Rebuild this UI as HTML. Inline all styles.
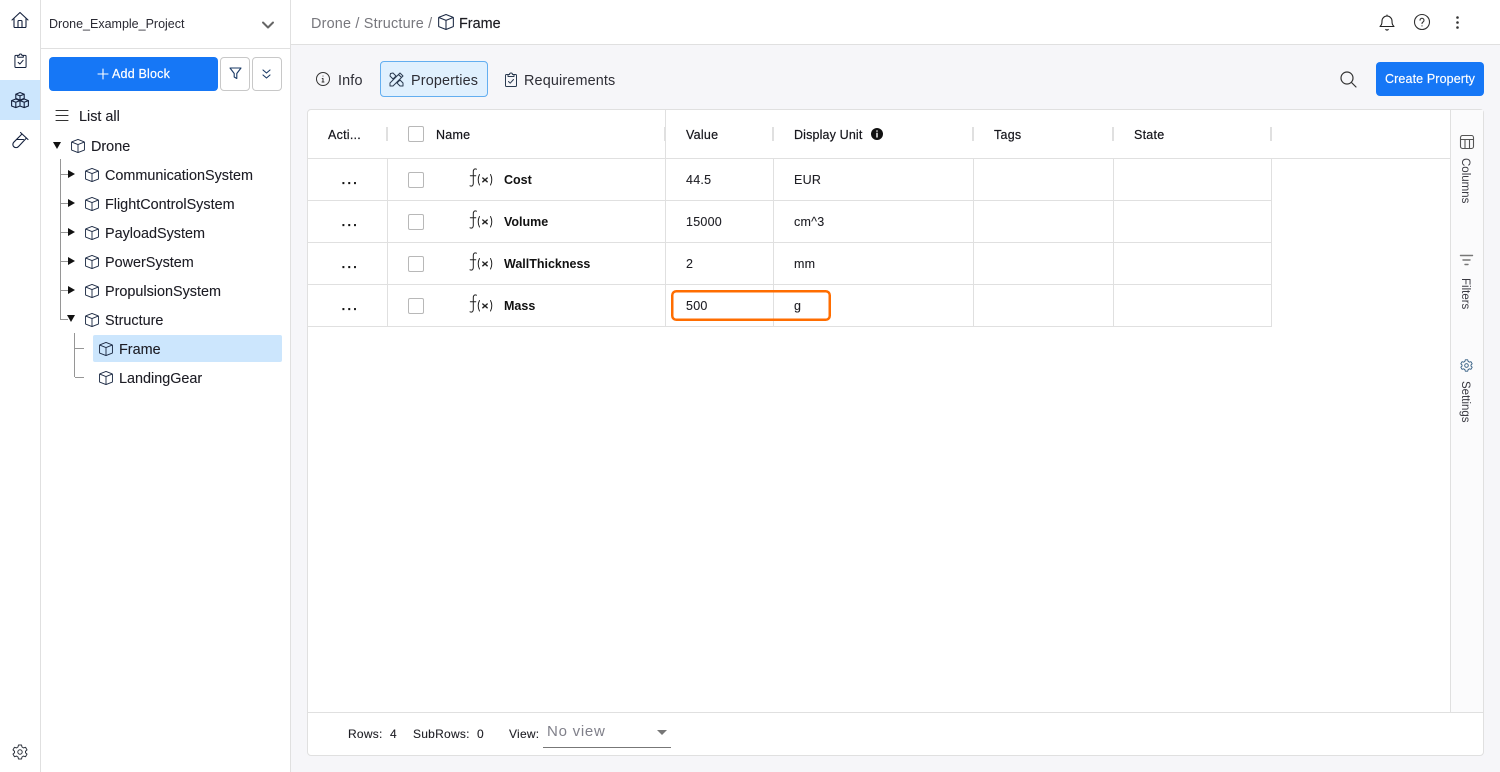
<!DOCTYPE html>
<html lang="en"><head><meta charset="utf-8"><title>Frame</title>
<style>
html,body{margin:0;padding:0}
body{width:1500px;height:772px;overflow:hidden;position:relative;background:#f6f6f9;font-family:"Liberation Sans",sans-serif;color:#1c1c22}
.a{position:absolute}
.t{position:absolute;white-space:nowrap;line-height:18px}
.tree{font-size:14.4px;color:#1c1c24;-webkit-text-stroke:.1px #1c1c24;margin-top:1px}
.th{font-size:12.5px;letter-spacing:.25px;color:#16161c;-webkit-text-stroke:.2px #16161c}
.td{font-size:12.5px;letter-spacing:.25px;color:#1e1e24;-webkit-text-stroke:.1px #1e1e24}
.b{font-size:12.5px;font-weight:bold;color:#111}
.cb{position:absolute;width:14px;height:14px;border:1px solid #b8b8b8;border-radius:2px;background:#fff;left:408px}
.hl{position:absolute;height:1px;background:#e0e0e0}
.vl{position:absolute;width:1px;background:#e0e0e0}
.sep{position:absolute;width:2px;height:14px;top:127px;background:#e0e0e0}
.g{position:absolute;background:#969696}
svg{position:absolute;overflow:visible;fill:none;stroke-linecap:round;stroke-linejoin:round}
.dots{position:absolute;left:341px;font-size:17px;letter-spacing:1.1px;line-height:10px;color:#111;-webkit-text-stroke:.3px #111}
.tri-r{position:absolute;width:0;height:0;border-left:7px solid #111;border-top:4.5px solid transparent;border-bottom:4.5px solid transparent}
.tri-d{position:absolute;width:0;height:0;border-top:7px solid #111;border-left:4.5px solid transparent;border-right:4.5px solid transparent}
.vt{position:absolute;white-space:nowrap;font-size:11.5px;color:#3a3a42;transform-origin:0 0;transform:rotate(90deg)}
.tab{font-size:14.4px;letter-spacing:.15px;color:#2e2e36;margin-top:1px}
</style></head>
<body>
<svg width="0" height="0" style="position:absolute">
<defs>
<symbol id="cube" viewBox="0.5 0.5 15 15" preserveAspectRatio="none"><path d="M8 1 14.500 3.500a.6.6 0 0 1 .4.6v7.800a.6.6 0 0 1-.4.6L8 15 1.500 12.500a.6.6 0 0 1-.4-.6V4.100a.6.6 0 0 1 .4-.6L8 1ZM1.300 3.800 8 6.500l6.700-2.700M8 6.500V15" stroke="#1c2a44" stroke-width="1" fill="none"/></symbol>
<symbol id="fx" viewBox="0 0 24 20"><path d="M7.500 1.200C5.800.4 4.300 1.200 4.300 3.500V15.500C4.300 17.800 2.800 18.500 1 17.800M1.300 7.800H6.800" stroke="#222" stroke-width="1" fill="none"/><path d="M10.500 6.500C8.800 9.500 8.800 14 10.500 17M21.500 6.500C23.200 9.500 23.200 14 21.500 17" stroke="#222" stroke-width="1" fill="none"/><path d="M13.800 10 18.200 13.800M18.200 10 13.800 13.800" stroke="#222" stroke-width="1.400" fill="none"/></symbol>
</defs>
</svg>

<!-- rail -->
<div class="a" style="left:0;top:0;width:40px;height:772px;background:#fff"></div>
<div class="a" style="left:0;top:80px;width:40px;height:40px;background:#cce6fd"></div>
<div class="vl" style="left:40px;top:0;height:772px"></div>
<svg style="left:11px;top:11px" width="18" height="18" viewBox="0 0 18 18" stroke="#14213d" stroke-width="1.100"><path d="M1 9 9 1.500 17 9M3 7.500V15.500a1 1 0 0 0 1 1h10a1 1 0 0 0 1-1V7.500M7 16.500V10.500a1 1 0 0 1 1-1h2a1 1 0 0 1 1 1v6"/></svg>
<svg style="left:14px;top:52px" width="13" height="17" viewBox="0 0 14 17" stroke="#14213d" stroke-width="1.100"><path d="M4 3H2a1 1 0 0 0-1 1v11a1 1 0 0 0 1 1h10a1 1 0 0 0 1-1V4a1 1 0 0 0-1-1h-2M4 5h6V3H8.500a1.500 1.500 0 0 0-3 0H4ZM4.500 10.500 6.300 12.300 9.800 8.300"/></svg>
<svg style="left:11px;top:92px" width="18" height="16" viewBox="0 0 18 16" stroke="#14213d" stroke-width="1.100"><path d="M9 .5 13.200 2.200V6.400L9 8.100 4.800 6.400V2.200ZM4.800 2.200 9 3.900 13.200 2.200M9 3.900V8.100M4.800 7 9 8.600V14L4.800 15.600 .6 14V8.600ZM.6 8.600 4.800 10.300 9 8.600M4.800 10.300V15.600M13.200 7 17.400 8.600V14L13.200 15.600 9 14V8.600ZM9 8.600 13.200 10.300 17.400 8.600M13.200 10.300V15.600"/></svg>
<svg style="left:12px;top:132px" width="16" height="16" viewBox="0 0 16 16" stroke="#14213d" stroke-width="1.100"><path d="M8.500 .5 16 7.500M10 2 1.800 10.200a3 3 0 0 0 4.500 4.500L14.500 6M5 7.500h6.500"/></svg>
<svg style="left:12px;top:744px" width="16" height="16" viewBox="0 0 16 16" stroke="#30353f" stroke-width="1"><path d="M6.500 1h3l.5 2 1.500.9 2-.6 1.500 2.600-1.500 1.400v1.400l1.500 1.400-1.500 2.600-2-.6-1.500.9-.5 2h-3l-.5-2-1.500-.9-2 .6L1 10.100l1.500-1.400V7.300L1 5.900l1.500-2.600 2 .6L6 3Z"/><circle cx="8" cy="8" r="2.200"/></svg>

<!-- sidebar -->
<div class="a" style="left:41px;top:0;width:249px;height:772px;background:#fff"></div>
<div class="vl" style="left:290px;top:0;height:772px"></div>
<div class="hl" style="left:41px;top:48px;width:249px"></div>
<div class="t" style="left:49px;top:15px;font-size:12.5px;color:#2a2a33">Drone_Example_Project</div>
<svg style="left:262px;top:21px" width="12" height="8" viewBox="0 0 12 8" stroke="#666" stroke-width="2"><path d="M1 1.500 6 6.500 11 1.500"/></svg>
<div class="a" style="left:49px;top:57px;width:169px;height:34px;background:#1677f6;border-radius:4px"></div>
<svg style="left:98px;top:69px" width="10" height="10" viewBox="0 0 10 10" stroke="#fff" stroke-width="1.100"><path d="M5 0V10M0 5H10"/></svg>
<div class="t" style="left:112px;top:65px;font-size:12.5px;letter-spacing:.2px;color:#fff;-webkit-text-stroke:.2px #fff">Add Block</div>
<div class="a" style="left:220px;top:57px;width:28px;height:32px;border:1px solid #c8c8c8;border-radius:4px;background:#fff"></div>
<svg style="left:229px;top:67px" width="13" height="13" viewBox="0 0 13 13" stroke="#1a3a66" stroke-width="1.100"><path d="M1 1H12L7.800 6.500V11.500L5.200 10V6.500Z"/></svg>
<div class="a" style="left:252px;top:57px;width:28px;height:32px;border:1px solid #c8c8c8;border-radius:4px;background:#fff"></div>
<svg style="left:262px;top:69px" width="9" height="10" viewBox="0 0 9 10" stroke="#1a3a66" stroke-width="1.100"><path d="M1 1 4.500 4 8 1M1 6 4.500 9 8 6"/></svg>
<svg style="left:55px;top:110px" width="14" height="11" viewBox="0 0 14 11" stroke="#333" stroke-width="1.100"><path d="M1 .5H13M1 5.500H13M1 10.500H13"/></svg>
<div class="t tree" style="left:79px;top:107px">List all</div>

<div class="tri-d" style="left:53px;top:142px"></div>
<svg style="left:71px;top:139px" width="14" height="14"><use href="#cube"/></svg>
<div class="t tree" style="left:91px;top:137px">Drone</div>

<div class="g" style="left:60px;top:159px;width:1px;height:161px"></div>
<div class="g" style="left:61px;top:174px;width:7px;height:1px"></div>
<div class="g" style="left:61px;top:203px;width:7px;height:1px"></div>
<div class="g" style="left:61px;top:232px;width:7px;height:1px"></div>
<div class="g" style="left:61px;top:261px;width:7px;height:1px"></div>
<div class="g" style="left:61px;top:290px;width:7px;height:1px"></div>
<div class="g" style="left:61px;top:319px;width:7px;height:1px"></div>

<div class="tri-r" style="left:68px;top:170px"></div>
<svg style="left:85px;top:168px" width="14" height="14"><use href="#cube"/></svg>
<div class="t tree" style="left:105px;top:166px">CommunicationSystem</div>
<div class="tri-r" style="left:68px;top:199px"></div>
<svg style="left:85px;top:197px" width="14" height="14"><use href="#cube"/></svg>
<div class="t tree" style="left:105px;top:195px">FlightControlSystem</div>
<div class="tri-r" style="left:68px;top:228px"></div>
<svg style="left:85px;top:226px" width="14" height="14"><use href="#cube"/></svg>
<div class="t tree" style="left:105px;top:224px">PayloadSystem</div>
<div class="tri-r" style="left:68px;top:257px"></div>
<svg style="left:85px;top:255px" width="14" height="14"><use href="#cube"/></svg>
<div class="t tree" style="left:105px;top:253px">PowerSystem</div>
<div class="tri-r" style="left:68px;top:286px"></div>
<svg style="left:85px;top:284px" width="14" height="14"><use href="#cube"/></svg>
<div class="t tree" style="left:105px;top:282px">PropulsionSystem</div>
<div class="tri-d" style="left:67px;top:315px"></div>
<svg style="left:85px;top:313px" width="14" height="14"><use href="#cube"/></svg>
<div class="t tree" style="left:105px;top:311px">Structure</div>

<div class="g" style="left:74px;top:333px;width:1px;height:44px"></div>
<div class="g" style="left:75px;top:348px;width:9px;height:1px"></div>
<div class="g" style="left:75px;top:377px;width:9px;height:1px"></div>
<div class="a" style="left:93px;top:335px;width:189px;height:27px;background:#cce6fd;border-radius:2px"></div>
<svg style="left:99px;top:342px" width="14" height="14"><use href="#cube"/></svg>
<div class="t tree" style="left:119px;top:340px">Frame</div>
<svg style="left:99px;top:371px" width="14" height="14"><use href="#cube"/></svg>
<div class="t tree" style="left:119px;top:369px">LandingGear</div>

<!-- top bar -->
<div class="a" style="left:291px;top:0;width:1209px;height:44px;background:#fff"></div>
<div class="hl" style="left:291px;top:44px;width:1209px"></div>
<div class="t" style="left:311px;top:15px;font-size:14.4px;letter-spacing:.2px;color:#77777d">Drone / Structure /</div>
<svg style="left:438px;top:14px" width="16" height="16"><use href="#cube"/></svg>
<div class="t" style="left:459px;top:15px;font-size:14.4px;color:#1c1c22;-webkit-text-stroke:.15px #1c1c22">Frame</div>
<svg style="left:1379px;top:14px" width="16" height="17" viewBox="0 0 16 17" stroke="#222" stroke-width="1.100"><path d="M1 12.500c1.500-1.500 2-2.500 2-5.500a5 5 0 0 1 10 0c0 3 .5 4 2 5.500ZM6.800 15.500a1.500 1.500 0 0 0 2.400 0M8 1V2"/></svg>
<svg style="left:1414px;top:14px" width="16" height="16" viewBox="0 0 16 16" stroke="#333" stroke-width="1.100"><circle cx="8" cy="8" r="7.500"/><path d="M6 6.200a2 2 0 1 1 3 1.800c-.7.400-1 .8-1 1.600M8 11.800v.2"/></svg>
<svg style="left:1456px;top:16px" width="3" height="13" viewBox="0 0 3 13"><circle style="fill:#333" cx="1.500" cy="1.500" r="1.300"/><circle style="fill:#333" cx="1.500" cy="6.500" r="1.300"/><circle style="fill:#333" cx="1.500" cy="11.500" r="1.300"/></svg>

<!-- tabs -->
<svg style="left:316px;top:72px" width="14" height="14" viewBox="0 0 14 14" stroke="#333" stroke-width="1"><circle cx="7" cy="7" r="6.500"/><path d="M7 6.500V10M6 10H8M6.200 6.500H7M7 4v.1"/></svg>
<div class="t tab" style="left:338px;top:71px">Info</div>
<div class="a" style="left:380px;top:61px;width:106px;height:34px;background:#e0f0fe;border:1px solid #63aef0;border-radius:4px"></div>
<svg style="left:389px;top:72px" width="15" height="15" viewBox="0 0 15 15" stroke="#2a3a50" stroke-width="1"><path d="M1 11 11 1l3 3L4 14H1ZM9.500 2.500l3 3M1.500 1.500 4 1 7 4 4 7 1 4ZM8 11l3-3 3 3 0 3-3 0Z"/></svg>
<div class="t tab" style="left:411px;top:71px">Properties</div>
<svg style="left:505px;top:72px" width="12" height="15" viewBox="0 0 12 15" stroke="#2a3a50" stroke-width="1"><path d="M3 2.500H1.500a1 1 0 0 0-1 1v10a1 1 0 0 0 1 1h9a1 1 0 0 0 1-1v-10a1 1 0 0 0-1-1H9M3 4.500h6v-2H7.500a1.500 1.500 0 0 0-3 0H3ZM3.500 9.500l1.700 1.700 3.300-3.700"/></svg>
<div class="t tab" style="left:524px;top:71px">Requirements</div>
<svg style="left:1340px;top:71px" width="17" height="17" viewBox="0 0 17 17" stroke="#333" stroke-width="1.200"><circle cx="7" cy="7" r="6"/><path d="M11.500 11.500 16 16"/></svg>
<div class="a" style="left:1376px;top:62px;width:108px;height:34px;background:#1677f6;border-radius:4px"></div>
<div class="t" style="left:1385px;top:70px;font-size:12.5px;letter-spacing:.12px;color:#fff;-webkit-text-stroke:.15px #fff">Create Property</div>

<!-- card -->
<div class="a" style="left:307px;top:109px;width:1175px;height:645px;background:#fff;border:1px solid #e0e0e0;border-radius:4px"></div>
<div class="a" style="left:1451px;top:110px;width:32px;height:602px;background:#fbfbfc"></div>
<div class="vl" style="left:1450px;top:110px;height:602px"></div>
<div class="hl" style="left:308px;top:712px;width:1175px"></div>

<div class="hl" style="left:308px;top:158px;width:1142px"></div>
<div class="hl" style="left:308px;top:200px;width:964px"></div>
<div class="hl" style="left:308px;top:242px;width:964px"></div>
<div class="hl" style="left:308px;top:284px;width:964px"></div>
<div class="hl" style="left:308px;top:326px;width:964px"></div>

<div class="vl" style="left:387px;top:159px;height:167px"></div>
<div class="vl" style="left:665px;top:110px;height:216px"></div>
<div class="vl" style="left:773px;top:159px;height:167px"></div>
<div class="vl" style="left:973px;top:159px;height:167px"></div>
<div class="vl" style="left:1113px;top:159px;height:167px"></div>
<div class="vl" style="left:1271px;top:159px;height:167px"></div>

<div class="sep" style="left:386px"></div>
<div class="sep" style="left:664px"></div>
<div class="sep" style="left:772px"></div>
<div class="sep" style="left:972px"></div>
<div class="sep" style="left:1112px"></div>
<div class="sep" style="left:1270px"></div>

<div class="t th" style="left:328px;top:126px">Acti...</div>
<div class="cb" style="top:126px"></div>
<div class="t th" style="left:436px;top:126px">Name</div>
<div class="t th" style="left:686px;top:126px">Value</div>
<div class="t th" style="left:794px;top:126px;letter-spacing:.15px">Display Unit</div>
<svg style="left:871px;top:128px" width="12" height="12" viewBox="0 0 12 12"><circle cx="6" cy="6" r="6" style="fill:#111"/><path d="M6 5.300V9M6 3v.2" stroke="#fff" stroke-width="1.400"/></svg>
<div class="t th" style="left:994px;top:126px">Tags</div>
<div class="t th" style="left:1134px;top:126px">State</div>

<!-- rows -->
<div class="dots" style="top:174px">...</div>
<div class="cb" style="top:172px"></div>
<svg style="left:469px;top:168px" width="24" height="20"><use href="#fx"/></svg>
<div class="t b" style="left:504px;top:171px">Cost</div>
<div class="t td" style="left:686px;top:171px">44.5</div>
<div class="t td" style="left:794px;top:171px">EUR</div>

<div class="dots" style="top:216px">...</div>
<div class="cb" style="top:214px"></div>
<svg style="left:469px;top:210px" width="24" height="20"><use href="#fx"/></svg>
<div class="t b" style="left:504px;top:213px">Volume</div>
<div class="t td" style="left:686px;top:213px">15000</div>
<div class="t td" style="left:794px;top:213px">cm^3</div>

<div class="dots" style="top:258px">...</div>
<div class="cb" style="top:256px"></div>
<svg style="left:469px;top:252px" width="24" height="20"><use href="#fx"/></svg>
<div class="t b" style="left:504px;top:255px">WallThickness</div>
<div class="t td" style="left:686px;top:255px">2</div>
<div class="t td" style="left:794px;top:255px">mm</div>

<div class="dots" style="top:300px">...</div>
<div class="cb" style="top:298px"></div>
<svg style="left:469px;top:294px" width="24" height="20"><use href="#fx"/></svg>
<div class="t b" style="left:504px;top:297px">Mass</div>
<div class="t td" style="left:686px;top:297px">500</div>
<div class="t td" style="left:794px;top:297px">g</div>
<svg style="left:671px;top:290px" width="160" height="31" viewBox="0 0 160 31"><rect x="1.250" y="1.250" width="157.500" height="28.500" rx="4" stroke="#ff6d00" stroke-width="2.500"/></svg>

<!-- side panel -->
<svg style="left:1460px;top:135px" width="14" height="14" viewBox="0 0 14 14" stroke="#555" stroke-width="1.100"><rect x=".5" y=".5" width="13" height="13" rx="2"/><path d="M.5 4.500H13.500M5 4.500V13.500M9.500 4.500V13.500"/></svg>
<div class="vt" style="left:1471px;top:158px">Columns</div>
<svg style="left:1460px;top:255px" width="13" height="10" viewBox="0 0 13 10" stroke="#777" stroke-width="1.400"><path d="M.5 .5H12.500M3 5H10M5 9.500H8"/></svg>
<div class="vt" style="left:1471px;top:278px">Filters</div>
<svg style="left:1460px;top:359px" width="13" height="13" viewBox="0 0 16 16" stroke="#2f5a80" stroke-width="1.100"><path d="M6.500 1h3l.5 2 1.500.9 2-.6 1.500 2.600-1.500 1.400v1.400l1.500 1.400-1.500 2.600-2-.6-1.500.9-.5 2h-3l-.5-2-1.500-.9-2 .6L1 10.100l1.500-1.400V7.300L1 5.900l1.500-2.600 2 .6L6 3Z"/><circle cx="8" cy="8" r="2.200"/></svg>
<div class="vt" style="left:1471px;top:381px">Settings</div>

<!-- footer -->
<div class="t td" style="left:348px;top:725px;font-size:12px">Rows:</div>
<div class="t td" style="left:390px;top:725px;font-size:12px">4</div>
<div class="t td" style="left:413px;top:725px;font-size:12px">SubRows:</div>
<div class="t td" style="left:477px;top:725px;font-size:12px">0</div>
<div class="t td" style="left:509px;top:725px;font-size:12px">View:</div>
<div class="t" style="left:547px;top:723px;font-size:15px;letter-spacing:.75px;color:#80808a">No view</div>
<div class="a" style="left:543px;top:747px;width:128px;height:1px;background:#777"></div>
<div class="a" style="left:657px;top:730px;width:0;height:0;border-top:5px solid #777;border-left:5px solid transparent;border-right:5px solid transparent"></div>
</body></html>
